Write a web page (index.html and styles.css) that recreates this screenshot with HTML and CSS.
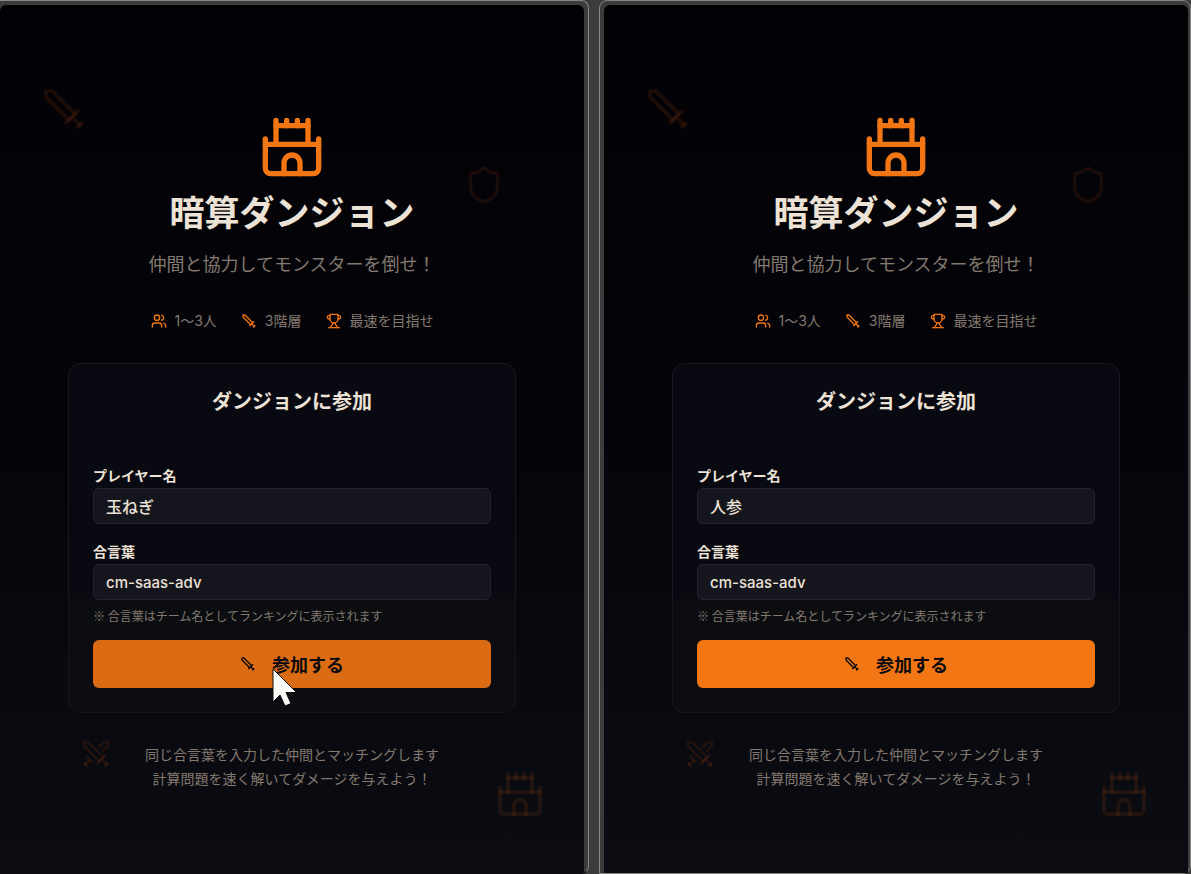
FILE: index.html
```html
<!DOCTYPE html>
<html lang="ja">
  <head>
    <meta charset="utf-8">
    <title>暗算ダンジョン</title>
    <link rel="stylesheet" href="styles.css">
  </head>
  <body>
    <svg class="sprite" aria-hidden="true">
      <symbol id="castle" viewBox="0 0 24 24">
        <path d="M22 20v-9H2v9a2 2 0 0 0 2 2h16a2 2 0 0 0 2-2Z"/>
        <path d="M18 11V4H6v7"/>
        <path d="M15 22v-4a3 3 0 0 0-6 0v4"/>
        <path d="M22 11V9"/><path d="M2 11V9"/>
        <path d="M6 4V2"/><path d="M18 4V2"/><path d="M10 4V2"/><path d="M14 4V2"/>
      </symbol>
      <symbol id="sword" viewBox="0 0 24 24">
        <path d="M14.5 17.5 3 6V3h3l11.5 11.5"/>
        <path d="m13 19 6-6"/><path d="m16 16 4 4"/><path d="m19 21 2-2"/>
      </symbol>
      <symbol id="swords" viewBox="0 0 24 24">
        <path d="M14.5 17.5 3 6V3h3l11.5 11.5"/>
        <path d="m13 19 6-6"/><path d="m16 16 4 4"/><path d="m19 21 2-2"/>
        <path d="M14.5 6.5 18 3h3v3l-3.5 3.5"/>
        <path d="m5 14 4 4"/><path d="m7 17-3 3"/><path d="m3 19 2 2"/>
      </symbol>
      <symbol id="shield" viewBox="0 0 24 24">
        <path d="M20 13c0 5-3.5 7.5-7.66 8.95a1 1 0 0 1-.67-.01C7.5 20.5 4 18 4 13V6a1 1 0 0 1 1-1c2 0 4.5-1.2 6.24-2.72a1.17 1.17 0 0 1 1.52 0C14.51 3.81 17 5 19 5a1 1 0 0 1 1 1z"/>
      </symbol>
      <symbol id="users" viewBox="0 0 24 24">
        <path d="M16 21v-2a4 4 0 0 0-4-4H6a4 4 0 0 0-4 4v2"/>
        <circle cx="9" cy="7" r="4"/>
        <path d="M22 21v-2a4 4 0 0 0-3-3.87"/>
        <path d="M16 3.13a4 4 0 0 1 0 7.75"/>
      </symbol>
      <symbol id="trophy" viewBox="0 0 24 24">
        <path d="M6 9H4.5a2.5 2.5 0 0 1 0-5H6"/>
        <path d="M18 9h1.5a2.5 2.5 0 0 0 0-5H18"/>
        <path d="M4 22h16"/>
        <path d="M10 14.66V17c0 .55-.47.98-.97 1.21C7.85 18.75 7 20.24 7 22"/>
        <path d="M14 14.66V17c0 .55.47.98.97 1.21C16.15 18.75 17 20.24 17 22"/>
        <path d="M18 2H6v7a6 6 0 0 0 12 0V2Z"/>
      </symbol>
    </svg>

    <div class="windows">
      <div class="window windowLeft">
        <main class="screen">
          <svg class="icon decor decorSword"><use href="#sword"/></svg>
          <svg class="icon decor decorShield"><use href="#shield"/></svg>
          <svg class="icon decor decorSwords"><use href="#swords"/></svg>
          <svg class="icon decor decorCastle"><use href="#castle"/></svg>

          <svg class="icon logo"><use href="#castle"/></svg>
          <h1>暗算ダンジョン</h1>
          <p class="lead">仲間と協力してモンスターを倒せ！</p>
          <ul class="features">
            <li><svg class="icon"><use href="#users"/></svg>1〜3人</li>
            <li><svg class="icon"><use href="#sword"/></svg>3階層</li>
            <li><svg class="icon"><use href="#trophy"/></svg>最速を目指せ</li>
          </ul>

          <form class="card">
            <h2>ダンジョンに参加</h2>
            <div class="field">
              <label for="name1">プレイヤー名</label>
              <input id="name1" type="text" value="玉ねぎ">
            </div>
            <div class="field">
              <label for="pass1">合言葉</label>
              <input id="pass1" class="passphrase" type="text" value="cm-saas-adv">
              <p class="hint">※ 合言葉はチーム名としてランキングに表示されます</p>
            </div>
            <button type="button" class="join hovered"><svg class="icon"><use href="#sword"/></svg>参加する</button>
            <svg class="cursor" viewBox="0 0 26 40">
              <path d="M1 1v33l7-7 5 11 6-2.500-5-11h10.500z"/>
            </svg>
          </form>

          <p class="note">同じ合言葉を入力した仲間とマッチングします<br>計算問題を速く解いてダメージを与えよう！</p>
        </main>
      </div>

      <div class="window windowRight">
        <main class="screen">
          <svg class="icon decor decorSword"><use href="#sword"/></svg>
          <svg class="icon decor decorShield"><use href="#shield"/></svg>
          <svg class="icon decor decorSwords"><use href="#swords"/></svg>
          <svg class="icon decor decorCastle"><use href="#castle"/></svg>

          <svg class="icon logo"><use href="#castle"/></svg>
          <h1>暗算ダンジョン</h1>
          <p class="lead">仲間と協力してモンスターを倒せ！</p>
          <ul class="features">
            <li><svg class="icon"><use href="#users"/></svg>1〜3人</li>
            <li><svg class="icon"><use href="#sword"/></svg>3階層</li>
            <li><svg class="icon"><use href="#trophy"/></svg>最速を目指せ</li>
          </ul>

          <form class="card">
            <h2>ダンジョンに参加</h2>
            <div class="field">
              <label for="name2">プレイヤー名</label>
              <input id="name2" type="text" value="人参">
            </div>
            <div class="field">
              <label for="pass2">合言葉</label>
              <input id="pass2" class="passphrase" type="text" value="cm-saas-adv">
              <p class="hint">※ 合言葉はチーム名としてランキングに表示されます</p>
            </div>
            <button type="button" class="join"><svg class="icon"><use href="#sword"/></svg>参加する</button>
          </form>

          <p class="note">同じ合言葉を入力した仲間とマッチングします<br>計算問題を速く解いてダメージを与えよう！</p>
        </main>
      </div>
    </div>
  </body>
</html>
```
FILE: styles.css
```css
body {
  margin: 0;
  background-color: #3c3c3c;
  color: #ece2d6;
  font-family: Inter, "Noto Sans CJK JP", sans-serif;
}

h1, h2, p, ul {
  margin: 0;
  padding: 0;
}

.sprite {
  position: absolute;
  width: 0;
  height: 0;
}

.icon {
  flex: none;
  width: 16px;
  height: 16px;
  fill: none;
  stroke: #f27613;
  stroke-width: 2;
  stroke-linecap: round;
  stroke-linejoin: round;
}

/* two browser windows side by side */
.windows {
  display: flex;
  gap: 10px;
  min-height: 100vh;
}

.window {
  display: flex;
  flex: 1 1 0;
  border: solid 1px #868686;
}

.windowLeft {
  padding: 4px 4px 0 0;
  border-left: 0;
  border-bottom-color: #0c0d12;
  border-radius: 0 8px 8px 0;
}

.windowRight {
  padding: 4px 2px 0 4px;
  border-radius: 8px 8px 8px 0;
}

.screen {
  position: relative;
  display: flex;
  flex: 1;
  flex-direction: column;
  align-items: center;
  padding: 110px 24px 80px;
  box-sizing: border-box;
  background: linear-gradient(#020206, #04040a 50%, #0c0d12);
  border-radius: 6px 6px 0 0;
}

/* translucent strokes, so crossing lines come out stronger */
.decor {
  position: absolute;
  stroke: rgba(242, 100, 19, 0.1);
}

.decorSword {
  top: 80px;
  left: 40px;
  width: 48px;
  height: 48px;
}

.decorShield {
  top: 160px;
  right: 80px;
  width: 40px;
  height: 40px;
}

.decorSwords {
  bottom: 103px;
  left: 80px;
  width: 32px;
  height: 32px;
}

.decorCastle {
  right: 40px;
  bottom: 55px;
  width: 48px;
  height: 48px;
}

.logo {
  width: 64px;
  height: 64px;
  margin-bottom: 14px;
}

h1 {
  font-size: 35px;
  font-weight: 700;
  line-height: 40px;
}

.lead {
  margin-top: 17px;
  color: #83796f;
  font-size: 18px;
  line-height: 29px;
}

.features {
  display: flex;
  gap: 24px;
  margin: 32px 0;
  list-style: none;
  color: #83796f;
  font-size: 14px;
  line-height: 20px;
}

.features li {
  display: flex;
  align-items: center;
  gap: 8px;
}

.card {
  position: relative;
  display: flex;
  flex-direction: column;
  gap: 16px;
  width: 100%;
  max-width: 448px;
  padding: 24px;
  box-sizing: border-box;
  background: linear-gradient(#080911, #080911 66%, #0b0d11 68%);
  border: solid 1px #17181f;
  border-radius: 12px;
}

h2 {
  margin-bottom: 32px;
  font-size: 20px;
  font-weight: 700;
  line-height: 28px;
  text-align: center;
}

.field {
  display: flex;
  flex-direction: column;
}

label {
  font-size: 14px;
  font-weight: 600;
  line-height: 24px;
}

input {
  height: 36px;
  padding: 0 12px;
  box-sizing: border-box;
  background-color: #14151d;
  border: solid 1px #24252f;
  border-radius: 6px;
  color: #ece2d6;
  font: 500 16px Inter, "Noto Sans CJK JP", sans-serif;
}

.passphrase {
  font-size: 15px;
}

.hint {
  margin-top: 8px;
  color: #83796f;
  font-family: "Noto Sans CJK JP", sans-serif;
  font-size: 12px;
  line-height: 16px;
}

.join {
  display: flex;
  align-items: center;
  justify-content: center;
  gap: 16px;
  height: 48px;
  padding: 0;
  background-color: #f27613;
  border: 0;
  border-radius: 6px;
  color: #0a0a0f;
  font: 600 18px Inter, "Noto Sans CJK JP", sans-serif;
}

.join .icon {
  stroke: #0a0a0f;
}

.join.hovered {
  background-color: #dc6c13;
}

.cursor {
  position: absolute;
  top: 304px;
  left: 203px;
  width: 26px;
  height: 40px;
  fill: #fafaf7;
  stroke: #0a0a0f;
  stroke-width: 1;
}

.note {
  margin-top: 30px;
  color: #83796f;
  font-size: 14px;
  line-height: 24px;
  text-align: center;
}
```
